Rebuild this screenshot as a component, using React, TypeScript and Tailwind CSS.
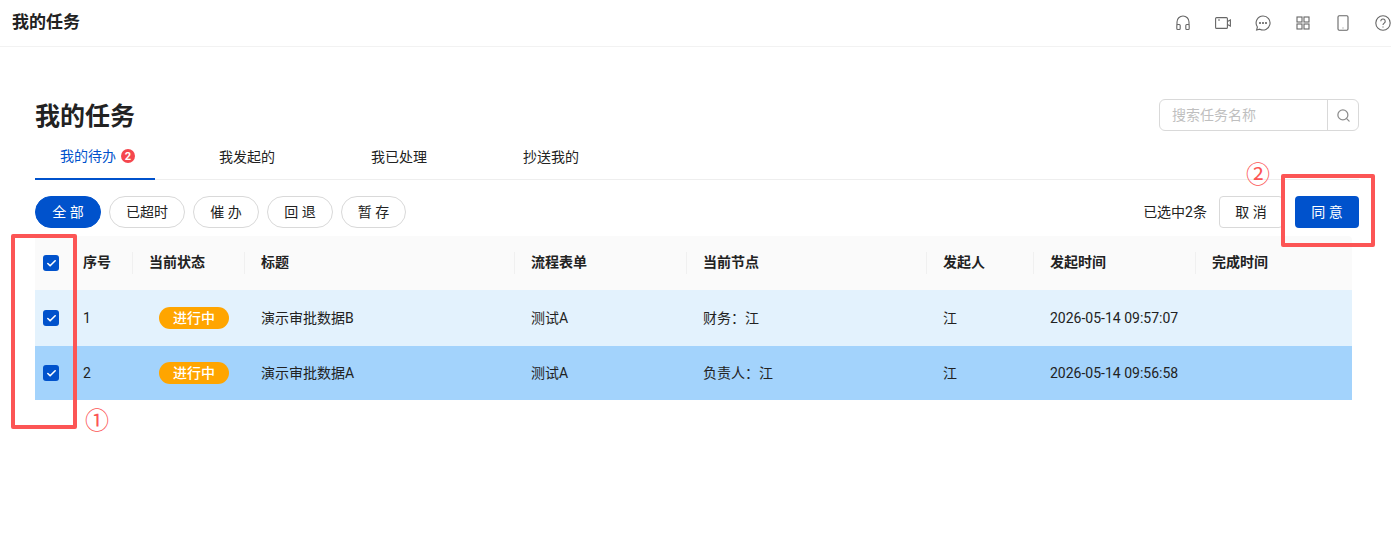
import { Check, Search } from "lucide-react";

const tabs = ["我的待办", "我发起的", "我已处理", "抄送我的"];
const filters = ["全 部", "已超时", "催 办", "回 退", "暂 存"];
const filterWidths = ["w-[66px]", "w-[76px]", "w-[66px]", "w-[66px]", "w-[65px]"];
const columns = ["序号", "当前状态", "标题", "流程表单", "当前节点", "发起人", "发起时间", "完成时间"];
const rows = [
  { no: "1", title: "演示审批数据B", form: "测试A", node: "财务：江", user: "江", time: "2026-05-14 09:57:07", bg: "bg-[#e3f2fd]", h: "h-[56px]" },
  { no: "2", title: "演示审批数据A", form: "测试A", node: "负责人：江", user: "江", time: "2026-05-14 09:56:58", bg: "bg-[#a3d3fc]", h: "h-[54px]" },
];
const grid = "grid grid-cols-[32px_66px_112px_270px_172px_240px_107px_162px_156px] items-center";

const Box = () => (
  <span className="flex h-4 w-4 items-center justify-center rounded-[3px] bg-[#0052cc] ml-[8px]">
    <Check size={11} strokeWidth={3.5} className="text-white" />
  </span>
);

const TopIcons = () => (
  <div className="flex items-center gap-[24px] text-[#666]">
    <svg width="16" height="16" viewBox="0 0 16 16" fill="none" stroke="currentColor" strokeWidth="1.1">
      <path d="M2 10V7a6 6 0 0 1 12 0v3" />
      <rect x="1.8" y="9.5" width="3.4" height="5" rx="1" />
      <rect x="10.8" y="9.5" width="3.4" height="5" rx="1" />
    </svg>
    <svg width="16" height="16" viewBox="0 0 16 16" fill="none" stroke="currentColor" strokeWidth="1.1">
      <rect x="0.6" y="2.6" width="11.8" height="10.8" rx="1" />
      <path d="M12.4 6.5 15.4 5v6l-3-1.5" />
      <path d="M3 5h2" />
    </svg>
    <svg width="16" height="16" viewBox="0 0 16 16" fill="none" stroke="currentColor" strokeWidth="1.1">
      <path d="M8 1a7 7 0 1 1-3.2 13.2L1.6 15l.8-3A7 7 0 0 1 8 1Z" />
      <circle cx="5" cy="8" r=".5" fill="currentColor" />
      <circle cx="8" cy="8" r=".5" fill="currentColor" />
      <circle cx="11" cy="8" r=".5" fill="currentColor" />
    </svg>
    <svg width="16" height="16" viewBox="0 0 16 16" fill="none" stroke="currentColor" strokeWidth="1.1">
      <rect x="2" y="2" width="5" height="5" />
      <rect x="9" y="2" width="5" height="5" />
      <rect x="2" y="9" width="5" height="5" />
      <rect x="9" y="9" width="5" height="5" />
    </svg>
    <svg width="16" height="16" viewBox="0 0 16 16" fill="none" stroke="currentColor" strokeWidth="1.1">
      <rect x="3" y="0.8" width="10" height="14.4" rx="1.2" />
      <path d="M7.6 13h.8" />
    </svg>
    <svg width="16" height="16" viewBox="0 0 16 16" fill="none" stroke="currentColor" strokeWidth="1.1">
      <circle cx="8" cy="8" r="7.2" />
      <path d="M5.8 6.2a2.2 2.2 0 1 1 3.4 1.9c-.8.5-1.2 1-1.2 1.9" />
      <path d="M8 11.6v.8" />
    </svg>
  </div>
);

export default function App() {
  return (
    <div className="relative h-[558px] w-[1391px] overflow-hidden bg-white text-[14px] text-[#222] font-['Roboto','Noto_Sans_CJK_SC',sans-serif]">
      <header className="flex h-[47px] items-center justify-between border-b border-[#f2f2f2] pl-[12px]">
        <span className="text-[17px] font-bold">我的任务</span>
        <TopIcons />
      </header>

      <main className="pl-[35px] pr-[32px] pt-[49px]">
        <div className="flex items-start justify-between">
          <h1 className="pt-[3px] text-[25px] font-bold leading-[36px]">我的任务</h1>
          <div className="mt-[3px] flex h-[32px] w-[200px] rounded-[6px] border border-[#d9d9d9]">
            <span className="flex-1 pl-[12px] leading-[30px] text-[#bfbfbf]">搜索任务名称</span>
            <span className="flex w-[31px] items-center justify-center border-l border-[#d9d9d9] text-[#8c8c8c]">
              <Search size={15} />
            </span>
          </div>
        </div>

        <div className="mt-[5px] flex h-[40px] border-b border-[#eeeeee]">
          {tabs.map((t, i) => (
            <div
              key={t}
              className={`flex h-[40px] items-center justify-center pb-[6px] ${
                i === 0 ? "mr-[16px] w-[120px] border-b-2 border-[#0052cc] pl-[5px] text-[#0052cc]" : "w-[152px]"
              }`}
            >
              {t}
              {i === 0 && (
                <span className="ml-[5px] flex h-[14px] w-[14px] items-center justify-center rounded-full bg-[#f5474e] text-[11px] font-bold leading-none text-white">
                  2
                </span>
              )}
            </div>
          ))}
        </div>

        <div className="flex h-[56px] items-center justify-between pt-[8px]">
          <div className="flex gap-[8px]">
            {filters.map((f, i) => (
              <span
                key={f}
                className={`flex h-[32px] items-center justify-center rounded-full border leading-none ${filterWidths[i]} ${
                  i === 0 ? "border-[#0052cc] bg-[#0052cc] text-white" : "border-[#d9d9d9]"
                }`}
              >
                {f}
              </span>
            ))}
          </div>
          <div className="flex items-center">
            <span className="mr-[12px] text-[14px]">已选中2条</span>
            <span className="flex h-[32px] w-[64px] items-center justify-center rounded-[4px] border border-[#d9d9d9]">取 消</span>
            <span className="ml-[12px] flex h-[32px] w-[64px] items-center justify-center rounded-[4px] bg-[#0052cc] text-white">同 意</span>
          </div>
        </div>

        <div className="w-[1317px]">
          <div className={`${grid} h-[54px] rounded-t-[4px] bg-[#fafafa] font-bold`}>
            <Box />
            {columns.map((c, i) => (
              <div key={c} className={`flex h-[22px] items-center pb-[2px] pl-[16px] ${i < 7 ? "border-r border-[#f0f0f0]" : ""}`}>
                {c}
              </div>
            ))}
          </div>
          {rows.map((r) => (
            <div key={r.no} className={`${grid} ${r.h} ${r.bg}`}>
              <Box />
              <div className="pl-[16px]">{r.no}</div>
              <div className="flex justify-center pl-[10px]">
                <span className="flex h-[22px] w-[70px] items-center justify-center rounded-full bg-[#ffa500] font-medium text-white">进行中</span>
              </div>
              <div className="pl-[16px]">{r.title}</div>
              <div className="pl-[16px]">{r.form}</div>
              <div className="pl-[16px]">{r.node}</div>
              <div className="pl-[16px]">{r.user}</div>
              <div className="pl-[16px]">{r.time}</div>
              <div />
            </div>
          ))}
        </div>
      </main>

      {/* 标注 */}
      <div className="absolute left-[11px] top-[234px] h-[195px] w-[66px] rounded-[2px] border-[4px] border-[#fc5555]" />
      <div className="absolute left-[1281px] top-[174px] h-[73px] w-[94px] rounded-[2px] border-[4px] border-[#fc5555] bg-white/0" />
      <span className="absolute left-[85px] top-[405px] text-[24px] leading-[32px] text-[#fc5555]">①</span>
      <span className="absolute left-[1246px] top-[159px] text-[24px] leading-[32px] text-[#fc5555]">②</span>
    </div>
  );
}
